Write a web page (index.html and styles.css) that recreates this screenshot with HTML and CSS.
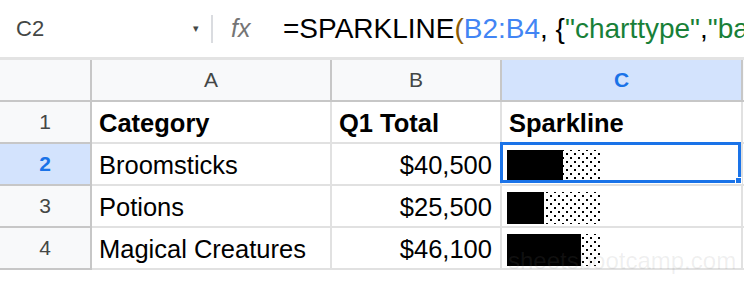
FILE: index.html
```html
<!DOCTYPE html>
<html lang="en">
<head>
    <meta charset="UTF-8">
    <meta name="viewport" content="width=device-width, initial-scale=1.0">
    <title>SPARKLINE bar chart</title>
    <link rel="stylesheet" href="styles.css">
</head>
<body>
    <div class="formula-bar">
        <div class="name-box">
            <span>C2</span>
            <span class="caret">&#9662;</span>
        </div>
        <div class="fx">fx</div>
        <div class="formula">=SPARKLINE<span class="paren">(</span><span class="ref">B2:B4</span>, {<span class="str">"charttype"</span>,<span class="str">"bar"</span>})</div>
    </div>

    <div class="sheet">
        <div class="corner"></div>
        <div class="col-head">A</div>
        <div class="col-head">B</div>
        <div class="col-head active">C</div>
        <div class="col-head"></div>

        <div class="row-head">1</div>
        <div class="cell bold">Category</div>
        <div class="cell bold">Q1 Total</div>
        <div class="cell bold">Sparkline</div>
        <div class="cell"></div>

        <div class="row-head active">2</div>
        <div class="cell">Broomsticks</div>
        <div class="cell num">$40,500</div>
        <div class="cell spark selected"><div class="bar"><div class="fill" style="width: 60%"></div></div></div>
        <div class="cell"></div>

        <div class="row-head">3</div>
        <div class="cell">Potions</div>
        <div class="cell num">$25,500</div>
        <div class="cell spark"><div class="bar"><div class="fill" style="width: 40%"></div></div></div>
        <div class="cell"></div>

        <div class="row-head">4</div>
        <div class="cell">Magical Creatures</div>
        <div class="cell num">$46,100</div>
        <div class="cell spark"><div class="bar"><div class="fill" style="width: 80%"></div></div></div>
        <div class="cell"></div>
    </div>

    <div class="watermark">sheetsbootcamp.com</div>
</body>
</html>
```

FILE: styles.css
```css
body {
    margin: 0;
    width: 744px;
    height: 282px;
    overflow: hidden;
    background: white;
    font-family: "Liberation Sans", Arial, sans-serif;
    color: #000;
    position: relative;
}
.formula-bar {
    height: 57px;
    border-bottom: 3px solid #e3e3e3;
    display: flex;
    align-items: center;
    white-space: nowrap;
    overflow: hidden;
}
.name-box {
    flex-shrink: 0;
    width: 213px;
    height: 28px;
    box-sizing: border-box;
    padding: 0 12px 0 16px;
    display: flex;
    justify-content: space-between;
    align-items: center;
    font-size: 22px;
    color: #444746;
    border-right: 2px solid #dadce0;
}
.caret {
    font-size: 11px;
    color: #444746;
}
.fx {
    flex-shrink: 0;
    width: 52px;
    margin-left: 18px;
    font-style: italic;
    font-size: 25px;
    color: #757575;
}
.formula {
    flex-shrink: 0;
    font-size: 28px;
}
.paren {
    color: #8a5a00;
}
.ref {
    color: #4285f4;
}
.str {
    color: #188038;
}
.sheet {
    display: grid;
    grid-template-columns: 92px 240px 170px 241px 1fr;
    grid-template-rows: repeat(5, 42px);
}
.corner, .col-head, .row-head, .cell {
    box-sizing: border-box;
    border-right: 2px solid #e1e1e1;
    border-bottom: 2px solid #e1e1e1;
}
.corner, .col-head, .row-head {
    background: #f8f9fa;
    border-color: #c7c7c7;
    display: flex;
    align-items: center;
    justify-content: center;
    font-size: 21px;
    color: #444746;
}
.col-head.active, .row-head.active {
    background: #d3e3fd;
    color: #1a73e8;
    font-weight: bold;
}
.cell {
    font-size: 25.5px;
    display: flex;
    align-items: flex-end;
    padding: 0 7px 4px;
    white-space: nowrap;
}
.bold {
    font-weight: bold;
}
.num {
    justify-content: flex-end;
    padding-right: 8px;
}
.spark {
    padding: 6px 0 0 5px;
    align-items: flex-start;
}
.bar {
    width: 93px;
    height: 32px;
    background-color: white;
    background-image:
        radial-gradient(circle, #000 0.8px, transparent 1.1px),
        radial-gradient(circle, #000 0.8px, transparent 1.1px);
    background-size: 8px 8px;
    background-position: 0 0, 4px 4px;
}
.fill {
    height: 100%;
    background: #000;
}
.selected {
    position: relative;
}
.selected::after {
    content: "";
    position: absolute;
    left: -2px;
    top: -2px;
    right: 0;
    bottom: 1px;
    border: 3px solid #1a73e8;
}
.selected::before {
    content: "";
    position: absolute;
    right: -1px;
    bottom: 0;
    width: 5px;
    height: 5px;
    background: #1a73e8;
    border: 1px solid white;
    z-index: 1;
}
.watermark {
    position: absolute;
    left: 508px;
    top: 247px;
    font-size: 24px;
    color: rgba(128, 128, 128, 0.13);
    pointer-events: none;
}
```
